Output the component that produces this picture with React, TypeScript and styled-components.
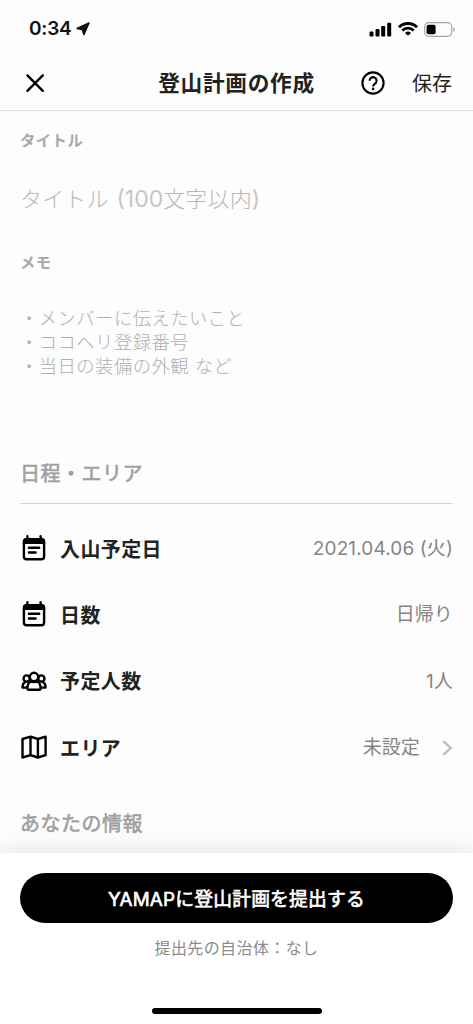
import React from "react";
import styled, { createGlobalStyle } from "styled-components";

const GlobalStyle = createGlobalStyle`
  * { box-sizing: border-box; }
  body {
    margin: 0;
    background: #fdfdfd;
    font-family: Inter, "Noto Sans CJK JP", sans-serif;
    color: #222;
  }
`;

const Screen = styled.div`
  display: flex;
  flex-direction: column;
  width: 100%;
  height: 1024px;
  overflow: hidden;
  background: #fdfdfd;
`;

const StatusBar = styled.div`
  display: flex;
  align-items: center;
  justify-content: space-between;
  height: 56px;
  flex: none;
  padding: 2px 17px 0 29px;
`;

const Clock = styled.div`
  display: flex;
  align-items: center;
  gap: 4px;
  font-size: 19px;
  font-weight: 600;
  letter-spacing: -0.2px;
  line-height: 24px;
  color: #111;
`;

const StatusIcons = styled.div`
  display: flex;
  align-items: center;
  gap: 6px;
`;

const Header = styled.header`
  display: grid;
  grid-template-columns: 1fr auto 1fr;
  align-items: center;
  flex: none;
  height: 55px;
  padding: 0 21px 0 25px;
  border-bottom: 1px solid #dedede;
`;

const HeaderTitle = styled.h1`
  margin: 0 4px 0 0;
  font-size: 21.7px;
  font-weight: 700;
  letter-spacing: 0.7px;
  line-height: 30px;
`;

const IconButton = styled.button`
  display: flex;
  width: max-content;
  padding: 0;
  border: 0;
  background: none;
  color: #000;
`;

const HeaderActions = styled.div`
  display: flex;
  align-items: center;
  justify-content: flex-end;
  gap: 27px;
`;

const SaveButton = styled.button`
  padding: 2px 0 0;
  border: 0;
  background: none;
  font-family: inherit;
  font-size: 20px;
  line-height: 28px;
  color: #222;
`;

const Form = styled.main`
  flex: 1;
  min-height: 0;
  overflow: hidden;
  padding: 18px 20px 0;
`;

const FieldLabel = styled.div`
  font-size: 15.3px;
  font-weight: 700;
  letter-spacing: 0.5px;
  line-height: 24px;
  color: #a8a8a8;
`;

const TitlePlaceholder = styled.div`
  margin: 30px 0 36px;
  font-size: 22px;
  font-weight: 300;
  letter-spacing: 0.15px;
  word-spacing: 1.5px;
  line-height: 32px;
  color: #b8b8b8;
`;

const Latin = styled.span`
  font-size: 23px;
  font-weight: 400;
  letter-spacing: 0;
  color: #c6c6c6;
`;

const MemoPlaceholder = styled.div`
  height: 153px;
  margin-top: 31px;
  font-size: 18.3px;
  font-weight: 300;
  letter-spacing: 0.5px;
  line-height: 24px;
  white-space: pre-line;
  color: #b0b0b0;
`;

const SectionTitle = styled.h2`
  margin: 0;
  padding-bottom: 14px;
  border-bottom: 1px solid #d6d6d6;
  font-size: 20px;
  font-weight: 400;
  letter-spacing: 0.5px;
  line-height: 30px;
  color: #a0a0a0;
  -webkit-text-stroke: 0.6px #a0a0a0;
`;

const Rows = styled.div`
  padding: 12px 0 28px;
`;

const Row = styled.div`
  display: flex;
  align-items: center;
  height: 66.3px;
`;

const RowIcon = styled.span`
  display: flex;
  width: 28px;
  margin-right: 12px;
  padding-bottom: 2px;
`;

const RowLabel = styled.span`
  flex: 1;
  padding-top: 1px;
  font-size: 19.9px;
  font-weight: 700;
  letter-spacing: 0.5px;
  line-height: 30px;
`;

const RowValue = styled.span`
  display: flex;
  align-items: center;
  gap: 22px;
  font-size: 19px;
  letter-spacing: 0.12px;
  line-height: 28px;
  font-weight: 400;
  color: #858585;
`;

const Footer = styled.footer`
  position: relative;
  display: flex;
  flex-direction: column;
  align-items: center;
  flex: none;
  height: 171px;
  padding: 20px 20px 0;
  background: #fff;
  box-shadow: 0 0 24px rgba(0, 0, 0, 0.12);
`;

const SubmitButton = styled.button`
  width: 100%;
  height: 50px;
  padding: 0 0 2px;
  border: 0;
  border-radius: 25px;
  background: #000;
  color: #fff;
  font-family: inherit;
  font-size: 18.8px;
  font-weight: 400;
  letter-spacing: 0.2px;
  -webkit-text-stroke: 0.65px #fff;
`;

const Destination = styled.div`
  margin-top: 13px;
  font-size: 16px;
  letter-spacing: 0.4px;
  line-height: 24px;
  color: #8c8c8c;
`;

const HomeIndicator = styled.div`
  width: 170px;
  height: 6px;
  margin-top: 48px;
  border-radius: 3px;
  background: #000;
`;

const LocationIcon = () => (
  <svg width="14" height="14" viewBox="0 0 14 14">
    <path d="M13 1 7.8 12.6 6.5 7.8 1 6.5Z" fill="#111" stroke="#111" strokeWidth="1.5" strokeLinejoin="round" />
  </svg>
);

const SignalIcon = () => (
  <svg width="23" height="15" viewBox="0 0 23 15" fill="#000">
    <rect x="0.5" y="9.5" width="4" height="5" rx="1" />
    <rect x="6.5" y="7" width="4" height="7.5" rx="1" />
    <rect x="12.2" y="4" width="4" height="10.5" rx="1" />
    <rect x="18.2" y="0.7" width="4" height="13.8" rx="1" />
  </svg>
);

const WifiIcon = () => (
  <svg width="20" height="14" viewBox="0 0 20 14" fill="none" stroke="#000" strokeWidth="2.8">
    <path d="M1 5.2a12.8 12.8 0 0 1 18 0" />
    <path d="M4.3 8.5a8.1 8.1 0 0 1 11.4 0" />
    <path d="M10 13.8 7 10.9a4.3 4.3 0 0 1 6 0Z" fill="#000" stroke="none" />
  </svg>
);

const BatteryIcon = () => (
  <svg width="32" height="15" viewBox="0 0 32 15">
    <rect x="0.7" y="0.7" width="27" height="13.6" rx="4" fill="none" stroke="#a5a5a5" strokeWidth="1.2" />
    <rect x="2.6" y="2.7" width="9" height="9.6" rx="2" fill="#000" />
    <path d="M29.3 5.2c2.2.8 2.2 3.8 0 4.6Z" fill="#a5a5a5" />
  </svg>
);

const CloseIcon = () => (
  <svg width="20" height="20" viewBox="0 0 20 20" fill="none" stroke="currentColor" strokeWidth="2.4" strokeLinecap="round">
    <path d="m2.4 2.4 15.4 15.4M17.8 2.4 2.4 17.8" />
  </svg>
);

const HelpIcon = () => (
  <svg width="24" height="24" viewBox="0 0 24 24" fill="none" stroke="currentColor" strokeWidth="2.1">
    <circle cx="12" cy="12" r="10.6" />
    <path d="M8.6 9.7a3.5 3.5 0 1 1 6.3 2.1c-.9 1.2-2.8 1.6-2.8 3.6" />
    <circle cx="12.1" cy="17.9" r="1.3" fill="currentColor" stroke="none" />
  </svg>
);

const CalendarIcon = () => (
  <svg width="28" height="28" viewBox="0 0 28 28" fill="none" stroke="#000" strokeWidth="2.4" strokeLinecap="round">
    <rect x="3.9" y="5.1" width="20.2" height="20.2" rx="2.8" />
    <path d="M3.9 9V7.5a2.6 2.6 0 0 1 2.6-2.6h15a2.6 2.6 0 0 1 2.6 2.6V9Z" fill="#000" strokeWidth="2" />
    <path d="M7.4 2.2v3M20.6 2.2v3M8.9 13.7h10.3M8.9 18.5h6.7" />
  </svg>
);

const PeopleIcon = () => (
  <svg width="28" height="28" viewBox="0 0 28 28" fill="none" stroke="#000" strokeWidth="2.4" strokeLinejoin="round">
    <circle cx="6.6" cy="11.5" r="3.1" />
    <circle cx="21.4" cy="11.5" r="3.1" />
    <path d="M6.6 14.9c-2.8 0-4.1 2-4.1 5.7h5M21.4 14.9c2.8 0 4.1 2 4.1 5.7h-5" />
    <circle cx="14" cy="10" r="4.2" fill="#fdfdfd" />
    <path d="M10.7 14.2c-2.3 1.4-3.3 4.5-3.3 7.1 0 1 .4 1.5 1.4 1.5h10.4c1 0 1.4-.5 1.4-1.5 0-2.6-1-5.7-3.3-7.1-2 1.1-4.6 1.1-6.6 0Z" fill="#fdfdfd" />
  </svg>
);

const MapIcon = () => (
  <svg width="28" height="28" viewBox="0 0 28 28" fill="none" stroke="#000" strokeWidth="2.4" strokeLinejoin="round">
    <path d="m2.5 6 8-2.3 7.4 2.3 7.7-2.3v18.5l-7.7 2.3-7.4-2.3-8 2.3ZM10.5 3.7v18.5M17.9 6v18.5" />
  </svg>
);

const ChevronIcon = () => (
  <svg width="11" height="18" viewBox="0 0 11 18" fill="none" stroke="#bdbdbd" strokeWidth="2.3">
    <path d="m1.3 2.1 7.4 6.9-7.4 6.9" />
  </svg>
);

const rows = [
  { label: "入山予定日", value: "2021.04.06 (火)", icon: <CalendarIcon /> },
  { label: "日数", value: "日帰り", icon: <CalendarIcon /> },
  { label: "予定人数", value: "1人", icon: <PeopleIcon /> },
  { label: "エリア", value: "未設定", icon: <MapIcon />, link: true },
];

export default function App() {
  return (
    <>
      <GlobalStyle />
      <Screen lang="ja">
        <StatusBar>
          <Clock>
            0:34
            <LocationIcon />
          </Clock>
          <StatusIcons>
            <SignalIcon />
            <WifiIcon />
            <BatteryIcon />
          </StatusIcons>
        </StatusBar>
        <Header>
          <IconButton aria-label="閉じる">
            <CloseIcon />
          </IconButton>
          <HeaderTitle>登山計画の作成</HeaderTitle>
          <HeaderActions>
            <IconButton aria-label="ヘルプ">
              <HelpIcon />
            </IconButton>
            <SaveButton>保存</SaveButton>
          </HeaderActions>
        </Header>
        <Form>
          <FieldLabel>タイトル</FieldLabel>
          <TitlePlaceholder>
            タイトル <Latin>(100</Latin>文字以内<Latin>)</Latin>
          </TitlePlaceholder>
          <FieldLabel>メモ</FieldLabel>
          <MemoPlaceholder>
            {"・メンバーに伝えたいこと\n・ココヘリ登録番号\n・当日の装備の外観 など"}
          </MemoPlaceholder>
          <SectionTitle>日程・エリア</SectionTitle>
          <Rows>
            {rows.map((row) => (
              <Row key={row.label}>
                <RowIcon>{row.icon}</RowIcon>
                <RowLabel>{row.label}</RowLabel>
                <RowValue>
                  {row.value}
                  {row.link && <ChevronIcon />}
                </RowValue>
              </Row>
            ))}
          </Rows>
          <SectionTitle>あなたの情報</SectionTitle>
        </Form>
        <Footer>
          <SubmitButton>YAMAPに登山計画を提出する</SubmitButton>
          <Destination>提出先の自治体：なし</Destination>
          <HomeIndicator />
        </Footer>
      </Screen>
    </>
  );
}
